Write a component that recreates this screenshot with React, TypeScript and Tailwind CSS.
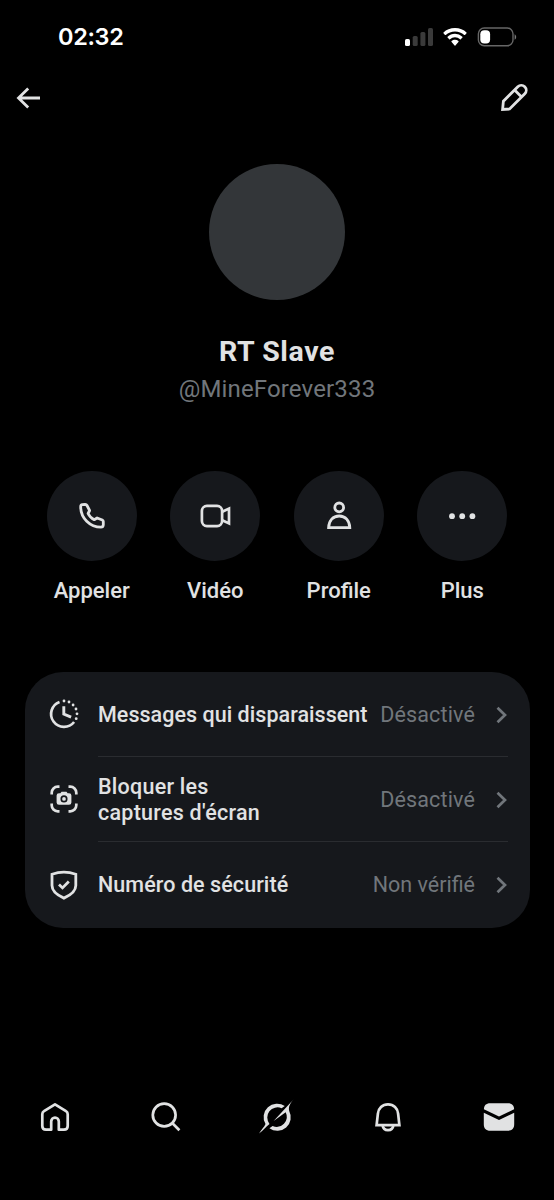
import React from "react";

const StatusBar = () => (
  <div className="flex h-[74px] items-center justify-between pl-[58px] pr-[37px]">
    <span className="font-['Inter',sans-serif] text-[23.5px] font-semibold leading-none tracking-[-0.35px] text-white">
      02:32
    </span>
    <div className="flex items-center">
      <svg width="28" height="18" viewBox="0 0 28 18">
        <rect x="0" y="11" width="5" height="7" rx="1.6" fill="#fff" />
        <rect x="7.7" y="8" width="5" height="10" rx="1.6" fill="#3a3a3a" />
        <rect x="15.4" y="4" width="5" height="14" rx="1.6" fill="#3a3a3a" />
        <rect x="23" y="0" width="5" height="18" rx="1.6" fill="#3a3a3a" />
      </svg>
      <svg className="ml-[10px]" width="24" height="18" viewBox="0 0 24 18" fill="#fff">
        <path d="M12 0C7.4 0 3.3 1.7.5 4.5a.6.6 0 0 0 0 .8l1.5 1.6a.6.6 0 0 0 .8 0C5.2 4.6 8.4 3.4 12 3.4s6.800 1.200 9.200 3.500a.6.6 0 0 0 .8 0l1.500-1.600a.6.6 0 0 0 0-.8C20.700 1.700 16.600 0 12 0Z" />
        <path d="M12 5.800c-2.900 0-5.500 1.100-7.400 2.900a.6.6 0 0 0 0 .9L6.200 11.300a.6.6 0 0 0 .8 0A7.300 7.300 0 0 1 12 9.300c1.900 0 3.700.7 5 2a.6.6 0 0 0 .8 0l1.600-1.700a.6.6 0 0 0 0-.9A10.800 10.800 0 0 0 12 5.800Z" />
        <path d="M12 11.800c-1.300 0-2.400.4-3.400 1.300a.6.6 0 0 0 0 .9l3 3.600a.6.6 0 0 0 .8 0l3-3.600a.6.6 0 0 0 0-.9A5 5 0 0 0 12 11.800Z" />
      </svg>
      <svg className="ml-[10px]" width="40" height="20" viewBox="0 0 40 20">
        <rect x="1.4" y="1" width="34.6" height="17.8" rx="5.8" fill="none" stroke="#666" strokeWidth="1.4" />
        <rect x="3.300" y="3.200" width="9.800" height="13.400" rx="4" fill="#fff" />
        <path d="M37.600 7.200v5.600c1-.5 1.600-1.600 1.600-2.800s-.6-2.300-1.600-2.800Z" fill="#777" />
      </svg>
    </div>
  </div>
);

const BackIcon = () => (
  <svg width="24" height="24" viewBox="0 0 24 24" fill="none" stroke="currentColor" strokeWidth="2.8">
    <path d="M24 12H2.500M12.200 2.500 2.500 12l9.700 9.500" />
  </svg>
);

const PencilIcon = () => (
  <svg width="32" height="32" viewBox="0 0 32 32" fill="none" stroke="currentColor" strokeWidth="2.8">
    <path d="M19.800 4.800a4.950 4.950 0 0 1 7 7L11.600 27 4.600 27.400l.8-8.200ZM16.600 8l7 7" />
  </svg>
);

const PhoneIcon = () => (
  <svg width="32" height="32" viewBox="0 0 32 32" fill="none" stroke="currentColor" strokeWidth="2.8" strokeLinejoin="round">
    <path d="M6.300 4.700 9 4.500q1.400-.1 2 1l2.600 5-1.500 3c1.300 2.800 3.300 4.900 6.100 6.200l2.900-1.700 5.200 2q1 .5 1 1.600v3.300q-.2 2.300-2.300 2.300C14 27.200 4.700 18 4.700 7q-.1-2.200 1.600-2.300Z" />
  </svg>
);

const VideoIcon = () => (
  <svg width="32" height="32" viewBox="0 0 32 32" fill="none" stroke="currentColor" strokeWidth="2.7">
    <rect x="2.9" y="5.9" width="20.2" height="20.2" rx="5" />
    <path d="m23.300 11.700 6.700-3.100v14.800l-6.700-3.100" />
  </svg>
);

const ProfileIcon = () => (
  <svg width="32" height="32" viewBox="0 0 32 32" fill="none" stroke="currentColor" strokeWidth="2.8">
    <circle cx="16.2" cy="7.4" r="4.4" />
    <path d="M5.600 27.700h21.200C26.600 20.500 22.300 16 16.200 16S5.800 20.500 5.600 27.700Z" />
  </svg>
);

const MoreIcon = () => (
  <svg width="32" height="32" viewBox="0 0 32 32" fill="currentColor">
    <circle cx="6" cy="16.2" r="2.9" />
    <circle cx="16.2" cy="16.2" r="2.9" />
    <circle cx="26.4" cy="16.2" r="2.9" />
  </svg>
);

const TimerIcon = () => (
  <svg width="32" height="32" viewBox="0 0 32 32" fill="none" stroke="currentColor" strokeWidth="2.7">
    <path d="M11.500 3.900A12.900 12.900 0 1 0 26.100 24" />
    <path d="M15.800 8.200V16l7.300 3.200" strokeWidth="2.9" />
    <g fill="currentColor" stroke="none">
      <circle cx="16" cy="3" r="1.4" />
      <circle cx="21" cy="4" r="1.4" />
      <circle cx="25.100" cy="7" r="1.4" />
      <circle cx="28" cy="11" r="1.4" />
      <circle cx="29" cy="15.800" r="1.4" />
      <circle cx="28.200" cy="20.700" r="1.4" />
    </g>
  </svg>
);

const CaptureIcon = () => (
  <svg width="32" height="32" viewBox="0 0 32 32" fill="none" stroke="currentColor" strokeWidth="2.7">
    <path d="M3.700 11.500V9.700a6 6 0 0 1 6-6h1.800M20.500 3.700h1.800a6 6 0 0 1 6 6v1.800M28.300 20.500v1.800a6 6 0 0 1-6 6h-1.800M11.500 28.300H9.700a6 6 0 0 1-6-6v-1.800" />
    <path
      d="M11 10.200h1.400l1.100-1.500h5l1.100 1.500H21a2.400 2.400 0 0 1 2.400 2.400v6.800a2.400 2.400 0 0 1-2.400 2.400H11a2.400 2.400 0 0 1-2.400-2.400v-6.800a2.400 2.400 0 0 1 2.400-2.400Z"
      fill="currentColor"
      stroke="none"
    />
    <circle cx="16" cy="15.9" r="2.7" stroke="#16181c" strokeWidth="1.7" />
  </svg>
);

const ShieldIcon = () => (
  <svg width="32" height="32" viewBox="0 0 32 32" fill="none" stroke="currentColor" strokeWidth="2.8">
    <path d="M15.900 3.100c3.900 0 7.900.7 11.900 2.100v11.300c0 5.700-4.600 9.400-11.900 12.600C8.600 25.900 4 22.200 4 16.500V5.200C8 3.800 12 3.100 15.900 3.100Z" />
    <path d="m11 15.500 3.500 3.400 6.300-6.400" />
  </svg>
);

const ChevronIcon = () => (
  <svg width="12" height="18" viewBox="0 0 12 18" fill="none" stroke="#71767b" strokeWidth="2.7">
    <path d="m1.500 1.700 7.500 7.300-7.500 7.300" />
  </svg>
);

const HomeIcon = () => (
  <svg width="36" height="36" viewBox="0 0 36 36" fill="none" stroke="currentColor" strokeWidth="2.7" strokeLinejoin="round">
    <path d="M18 5.300 29 12.200q1.700 1 1.700 3V27q0 3.700-3.700 3.700h-5.200v-8.200a3.800 3.800 0 0 0-7.600 0v8.200H9q-3.700 0-3.700-3.700V15.200q0-2 1.700-3Z" />
  </svg>
);

const SearchIcon = () => (
  <svg width="36" height="36" viewBox="0 0 36 36" fill="none" stroke="currentColor" strokeWidth="2.7">
    <circle cx="16.2" cy="16" r="11.4" />
    <path d="m24.200 24 7.200 7.200" />
  </svg>
);

const GrokIcon = () => (
  <svg width="36" height="36" viewBox="0 0 36 36" fill="currentColor">
    <path d="M25.800 7.100A13.500 13.500 0 0 0 6.500 25.100C5.300 28 2.500 30.500 0 34.500c4-3.200 6.900-6.500 10.500-9.600A10.200 10.200 0 0 1 22.600 9.200Z" />
    <path d="M34.700.2 14.600 22.100l12.100-8.900a10.200 10.200 0 0 1-13.100 13.900l-3.200 2.100A13.500 13.500 0 0 0 30.200 11.900c-1-4.200.8-7.400 4.500-11.700Z" />
  </svg>
);

const BellIcon = () => (
  <svg width="36" height="36" viewBox="0 0 36 36" fill="none" stroke="currentColor" strokeWidth="2.7">
    <path d="M18 5.300c5.600 0 9.700 4 10.100 9.300l1.300 11.600H6.600l1.300-11.600C8.300 9.300 12.400 5.300 18 5.300Z" />
    <path d="M12.600 26.200c.4 3 2.500 4.900 5.400 4.900s5-1.900 5.400-4.900" />
  </svg>
);

const MailIcon = () => (
  <svg width="36" height="36" viewBox="0 0 36 36" fill="currentColor">
    <path d="M2.900 10.300C3 6.400 5 4.200 9.200 4.200h17.600c4.200 0 6.200 2.200 6.300 6.100L18 17.600Z" />
    <path d="M2.800 13.700 18 21.100l15.200-7.400v11.500c0 4.300-2.200 6.500-6.500 6.500H9.300c-4.300 0-6.500-2.200-6.500-6.500Z" />
  </svg>
);

const actions = [
  { label: "Appeler", icon: <PhoneIcon /> },
  { label: "Vidéo", icon: <VideoIcon /> },
  { label: "Profile", icon: <ProfileIcon /> },
  { label: "Plus", icon: <MoreIcon /> },
];

const settings = [
  {
    label: "Messages qui disparaissent",
    value: "Désactivé",
    icon: <TimerIcon />,
    labelClass: "tracking-[0.04px]",
    valueClass: "tracking-[0.15px]",
  },
  {
    label: "Bloquer les\ncaptures d'écran",
    value: "Désactivé",
    icon: <CaptureIcon />,
    labelClass: "tracking-[0.25px]",
    valueClass: "tracking-[0.15px]",
  },
  {
    label: "Numéro de sécurité",
    value: "Non vérifié",
    icon: <ShieldIcon />,
    labelClass: "tracking-[0.08px]",
    valueClass: "tracking-[0px]",
  },
];

const tabs = [
  { name: "home", icon: <HomeIcon /> },
  { name: "search", icon: <SearchIcon /> },
  { name: "grok", icon: <GrokIcon /> },
  { name: "notifications", icon: <BellIcon /> },
  { name: "messages", icon: <MailIcon /> },
];

export default function App() {
  return (
    <div className="flex h-[1200px] w-[554px] flex-col overflow-hidden bg-black font-['Roboto',sans-serif] text-[#e1e2e3]">
      <StatusBar />

      <header className="flex h-12 items-center justify-between pl-4 pr-6">
        <button aria-label="Retour">
          <BackIcon />
        </button>
        <button aria-label="Modifier">
          <PencilIcon />
        </button>
      </header>

      <section className="flex flex-col items-center pt-[42px]">
        <div className="size-[136px] rounded-full bg-[#333639]" />
        <h1 className="mt-[34px] text-[28.5px] font-bold leading-9 tracking-[0.6px]">RT Slave</h1>
        <p className="mt-[3px] text-[24px] leading-8 tracking-[0.15px] text-[#71767b]">@MineForever333</p>
      </section>

      <section className="mt-[66px] grid grid-cols-4 px-[30px]">
        {actions.map((action) => (
          <button key={action.label} className="flex flex-col items-center">
            <span className="flex size-[90px] items-center justify-center rounded-full bg-[#16181c]">
              {action.icon}
            </span>
            <span className="mt-[16px] text-[22px] font-medium leading-7">{action.label}</span>
          </button>
        ))}
      </section>

      <section className="mx-[24.5px] mt-[66.5px] h-[256px] rounded-[38px] bg-[#16181c] pl-[23.5px] pr-[22px]">
        {settings.map((item, i) => (
          <div key={item.label} className="flex h-[85.3px] items-center">
            {item.icon}
            <div
              className={`ml-[18px] flex h-full flex-1 items-center ${
                i < settings.length - 1 ? "border-b border-[#2a2c30] pt-[3px]" : "pt-[1px]"
              }`}
            >
              <span className={`whitespace-pre text-[21.5px] font-medium leading-[26px] ${item.labelClass}`}>
                {item.label}
              </span>
              <span className={`ml-auto mr-[20.5px] text-[21.5px] text-[#71767b] ${item.valueClass}`}>
                {item.value}
              </span>
              <ChevronIcon />
            </div>
          </div>
        ))}
      </section>

      <nav className="mt-auto mb-[65.5px] grid grid-cols-5">
        {tabs.map((tab) => (
          <button key={tab.name} aria-label={tab.name} className="flex justify-center">
            {tab.icon}
          </button>
        ))}
      </nav>
    </div>
  );
}
